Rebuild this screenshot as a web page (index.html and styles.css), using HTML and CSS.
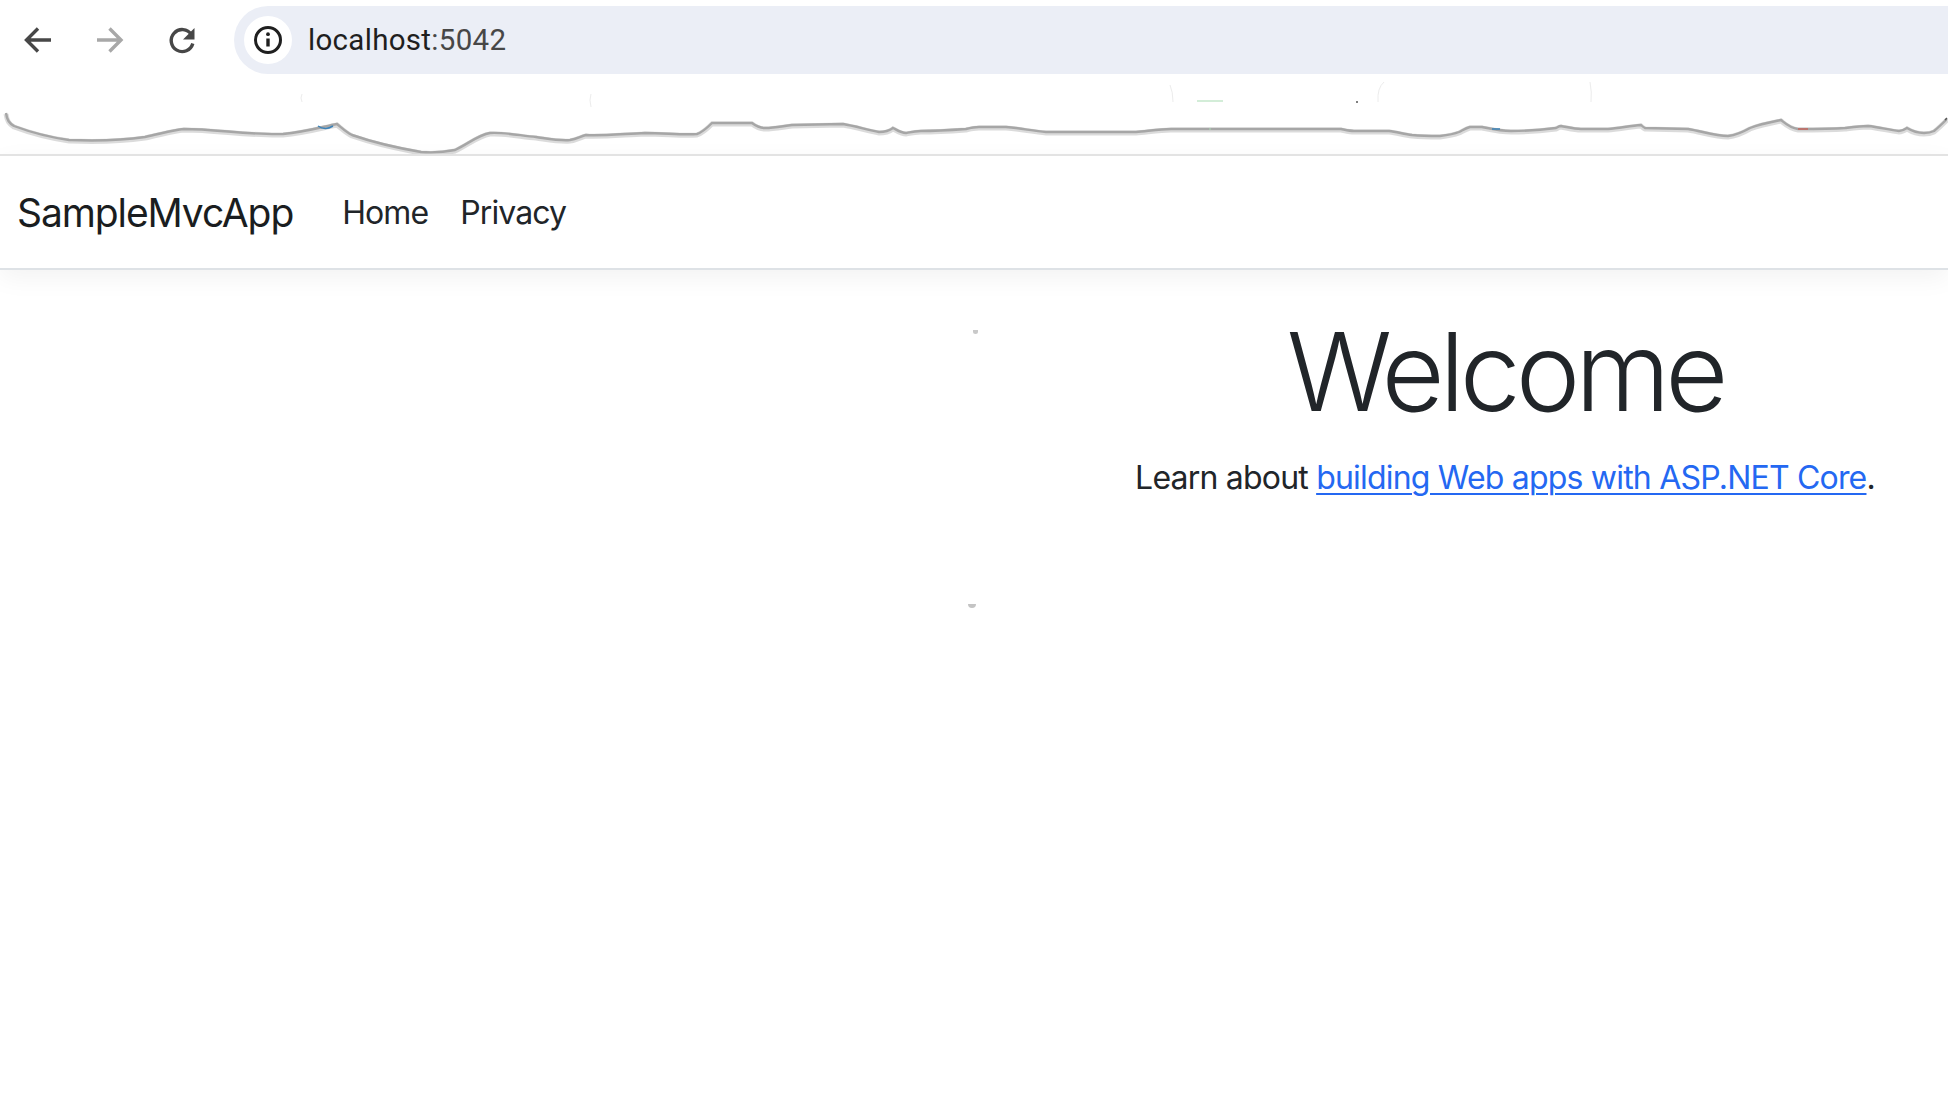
FILE: index.html
```html
<!DOCTYPE html>
<html lang="en">
<head>
<meta charset="utf-8">
<title>SampleMvcApp</title>
<link rel="stylesheet" href="styles.css">
</head>
<body>
<div class="toolbar">
  <div class="tools">
    <svg class="tool" viewBox="0 0 36 36"><path class="ic-dark" d="M31 18H8M18 6.500 6.500 18 18 29.500"/></svg>
    <svg class="tool" viewBox="0 0 36 36"><path class="ic-light" d="M5 18h22M17.500 6.500 29 18 17.500 29.500"/></svg>
    <svg class="tool" viewBox="0 0 36 36"><path class="ic-dark" d="M28.800 21.500a11 11 0 1 1-1.400-9"/><path class="ic-fill" d="M30.500 6v11.500h-11.500z"/></svg>
  </div>
  <div class="omnibox">
    <span class="site-chip">
      <svg class="info" viewBox="0 0 32 32"><circle class="info-ring" cx="16" cy="16" r="12.500"/><path class="info-bar" d="M16 14.500v8"/><circle class="info-dot" cx="16" cy="10.200" r="1.900"/></svg>
    </span>
    <span class="url">localhost<span class="url-port">:5042</span></span>
  </div>
</div>
<div class="torn-strip">
  <svg class="torn" viewBox="0 74 1948 80" width="1948" height="80">
    <path class="torn-shade" d="M6 113C7 120 9 123 14 126C30 132 48 137 69 140C95 141 125 140 145 137C160 134 172 130 184 129C215 129 250 135 283 134C305 132 322 127 337 124C342 128 346 132 352 135C375 143 398 148 421 152C433 153 445 152 455 150C468 144 478 135 490 133C505 132 522 136 536 137C550 139 560 141 570 140C577 139 581 136 586 135C600 136 622 134 645 133C665 133 682 135 697 134C703 132 708 127 712 123L752 123C756 126 760 128 765 128C775 128 783 126 792 125L843 124C855 126 868 130 879 132C884 132 889 131 893 128C897 130 901 133 906 133C911 132 915 131 921 131C938 131 952 130 966 129C970 128 974 127 979 127L1006 127C1020 128 1033 131 1046 132L1136 132C1148 131 1160 129 1171 129L1341 129C1346 130 1350 131 1354 131L1389 131C1397 132 1404 134 1412 135C1422 136 1431 136 1440 136C1448 135 1454 134 1459 132C1463 130 1466 128 1470 127C1474 127 1478 127 1482 127C1492 129 1501 131 1511 131C1526 131 1541 130 1556 128C1558 127 1559 126 1561 126C1567 127 1574 129 1581 129L1608 129C1619 128 1630 126 1641 125C1642 126 1643 127 1645 128L1688 129C1701 131 1715 136 1728 136C1736 135 1743 132 1750 128C1760 124 1771 122 1781 120C1786 124 1790 128 1798 129C1815 129 1830 129 1845 128C1853 127 1860 126 1868 126C1879 127 1889 130 1899 131C1902 131 1904 130 1907 128C1912 131 1917 133 1924 133C1929 133 1932 132 1934 131C1939 127 1943 123 1947 119"/>
    <path class="torn-line" d="M6 113C7 120 9 123 14 126C30 132 48 137 69 140C95 141 125 140 145 137C160 134 172 130 184 129C215 129 250 135 283 134C305 132 322 127 337 124C342 128 346 132 352 135C375 143 398 148 421 152C433 153 445 152 455 150C468 144 478 135 490 133C505 132 522 136 536 137C550 139 560 141 570 140C577 139 581 136 586 135C600 136 622 134 645 133C665 133 682 135 697 134C703 132 708 127 712 123L752 123C756 126 760 128 765 128C775 128 783 126 792 125L843 124C855 126 868 130 879 132C884 132 889 131 893 128C897 130 901 133 906 133C911 132 915 131 921 131C938 131 952 130 966 129C970 128 974 127 979 127L1006 127C1020 128 1033 131 1046 132L1136 132C1148 131 1160 129 1171 129L1341 129C1346 130 1350 131 1354 131L1389 131C1397 132 1404 134 1412 135C1422 136 1431 136 1440 136C1448 135 1454 134 1459 132C1463 130 1466 128 1470 127C1474 127 1478 127 1482 127C1492 129 1501 131 1511 131C1526 131 1541 130 1556 128C1558 127 1559 126 1561 126C1567 127 1574 129 1581 129L1608 129C1619 128 1630 126 1641 125C1642 126 1643 127 1645 128L1688 129C1701 131 1715 136 1728 136C1736 135 1743 132 1750 128C1760 124 1771 122 1781 120C1786 124 1790 128 1798 129C1815 129 1830 129 1845 128C1853 127 1860 126 1868 126C1879 127 1889 130 1899 131C1902 131 1904 130 1907 128C1912 131 1917 133 1924 133C1929 133 1932 132 1934 131C1939 127 1943 123 1947 119"/>
    <path class="speck-faint" d="M302 94Q300 98 302 102M591 94Q589 100 591 107M1170 85Q1173 92 1173 102M1378 102Q1377 88 1384 82M1590 82Q1592 92 1591 102"/>
    <path class="speck-blue" d="M318 126Q325 131 333 126M1492 129H1500"/>
    <path class="speck-green" d="M1197 101H1223M1209 129H1211"/>
    <path class="speck-red" d="M1798 129H1808"/>
    <path class="speck-dark" d="M1356 102H1358M1945 120L1947 118"/>
  </svg>
</div>
<header class="navbar">
  <a class="brand" href="#">SampleMvcApp</a>
  <nav class="nav-links">
    <a class="nav-link" href="#">Home</a>
    <a class="nav-link" href="#">Privacy</a>
  </nav>
</header>
<main class="content">
  <h1 class="title">Welcome</h1>
  <p class="lead">Learn about <a class="lead-link" href="#">building Web apps with ASP.NET Core</a>.</p>
</main>
<span class="mark mark-top"></span>
<span class="mark mark-bottom"></span>
</body>
</html>
```
FILE: styles.css
```css
* { box-sizing: border-box; }
html, body { margin: 0; height: 100%; background: #fff; }
body {
  position: relative;
  overflow: hidden;
  font-family: Inter, "Liberation Sans", sans-serif;
  color: #212529;
}
a { text-decoration: none; color: inherit; }

.toolbar { display: flex; height: 74px; padding-top: 6px; background: #fff; }
.tools { display: flex; gap: 36px; padding-left: 20px; margin-top: 16px; height: 36px; }
.tool { width: 36px; height: 36px; display: block; }
.ic-dark, .ic-light { fill: none; stroke-width: 3.400; }
.ic-dark { stroke: #474747; }
.ic-light { stroke: #a8a8a8; }
.ic-fill { fill: #474747; }

.omnibox {
  flex: 1;
  height: 68px;
  margin-left: 34px;
  padding-left: 10px;
  display: flex;
  align-items: center;
  gap: 16px;
  background: #ebeef6;
  border-radius: 34px 0 0 34px;
}
.site-chip {
  width: 48px; height: 48px; border-radius: 50%;
  background: #fff;
  display: flex; align-items: center; justify-content: center;
}
.info { width: 32px; height: 32px; display: block; }
.info-ring { fill: none; stroke: #1f1f1f; stroke-width: 3; }
.info-bar { fill: none; stroke: #1f1f1f; stroke-width: 3.400; }
.info-dot { fill: #1f1f1f; }
.url { font-family: Roboto, sans-serif; font-size: 29.500px; color: #1f1f1f; letter-spacing: .3px; }
.url-port { color: #474747; }

.torn-strip { height: 80px; }
.torn { display: block; }
.torn-shade { fill: none; stroke: #000; stroke-opacity: .14; stroke-width: 5; transform: translateY(1px); }
.torn-line { fill: none; stroke: #a6a6a6; stroke-width: 2.400; }
.speck-faint { fill: none; stroke: #ececec; stroke-width: 1; }
.speck-blue { fill: none; stroke: #3b82b8; stroke-width: 1.500; }
.speck-green { fill: none; stroke: #a8dcb2; stroke-width: 1.200; }
.speck-red { fill: none; stroke: #c2645c; stroke-width: 1.500; }
.speck-dark { fill: none; stroke: #555; stroke-width: 1.500; }

.navbar {
  height: 116px;
  display: flex;
  align-items: center;
  padding: 0 0 0 17px;
  border-top: 2px solid #e3e3e3;
  border-bottom: 2px solid #dee2e6;
  box-shadow: 0 8px 24px rgba(0, 0, 0, .05);
  background: #fff;
}
.brand { font-size: 39px; letter-spacing: -1.100px; color: #1a1d20; margin-right: 49px; }
.nav-links { display: flex; gap: 32px; }
.nav-link { font-size: 32px; letter-spacing: -.900px; color: #212529; }

.content { padding: 36px 0 0 1062px; text-align: center; }
.title { margin: 0; font-size: 109px; font-weight: 300; line-height: 1.2; letter-spacing: -5.100px; }
.lead { margin: 17px 0 0; font-size: 32px; letter-spacing: -.800px; line-height: 1.5; }
.lead-link { color: #2468f2; text-decoration: underline; text-decoration-thickness: 2px; text-underline-offset: 4px; }

.mark { position: absolute; width: 5px; height: 4px; background: #c9c9c9; border-radius: 0 0 3px 3px; }
.mark-top { left: 973px; top: 330px; }
.mark-bottom { left: 968px; top: 604px; width: 8px; border-radius: 0 0 4px 4px; background: #c4c4c4; }
```
